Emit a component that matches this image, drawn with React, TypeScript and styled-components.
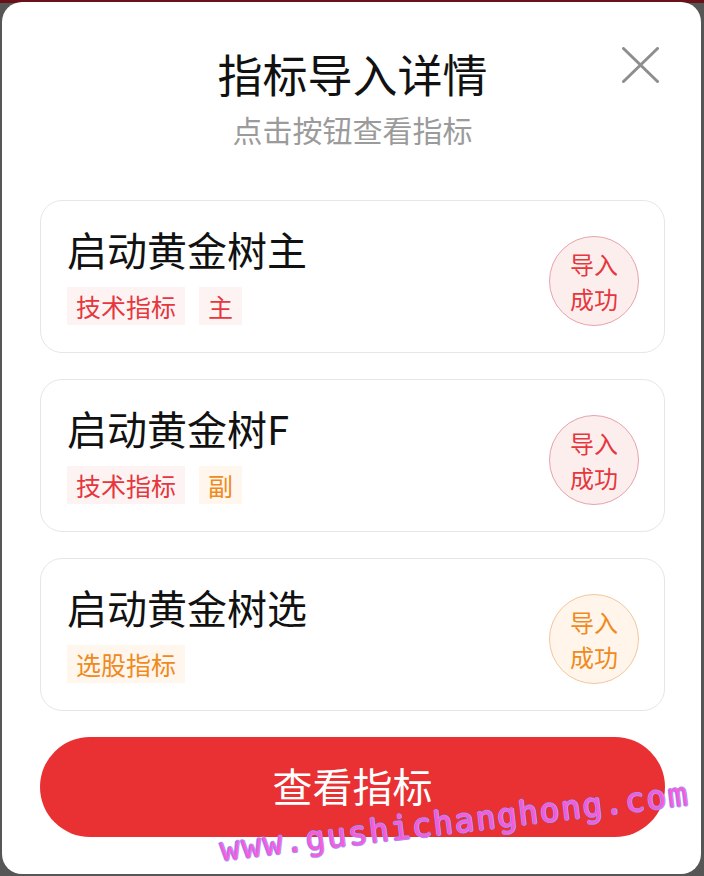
import React from "react";
import styled, { createGlobalStyle } from "styled-components";

const GlobalStyle = createGlobalStyle`
  html, body {
    margin: 0;
    padding: 0;
  }
  body {
    background: linear-gradient(#6a1018 0 3px, #565656 3px);
    font-family: "Noto Sans CJK SC", "Noto Sans", sans-serif;
  }
  * { box-sizing: border-box; }
`;

const Backdrop = styled.div`
  width: 704px;
  height: 876px;
  padding: 2px 3px 2px 2px;
`;

const Modal = styled.div`
  position: relative;
  height: 872px;
  background: #ffffff;
  border-radius: 20px;
  padding: 46px 36px 0 38px;
  display: flex;
  flex-direction: column;
  overflow: hidden;
`;

const Header = styled.header`
  display: flex;
  flex-direction: column;
  align-items: center;
`;

const Title = styled.h1`
  margin: 0;
  font-size: 45px;
  line-height: 52px;
  font-weight: 400;
  color: #111111;
`;

const Subtitle = styled.p`
  margin: 11px 0 0;
  font-size: 30px;
  line-height: 36px;
  color: #9b9b9b;
`;

const CloseButton = styled.button`
  position: absolute;
  top: 45px;
  right: 42px;
  width: 37px;
  height: 36px;
  padding: 0;
  border: none;
  background: transparent;
  display: flex;
`;

const CardList = styled.div`
  margin-top: 53px;
  display: flex;
  flex-direction: column;
  gap: 26px;
`;

const Card = styled.div`
  display: flex;
  align-items: center;
  border: 1px solid #e6e6e6;
  border-radius: 22px;
  padding: 24px 25px 27px 26px;
`;

const CardBody = styled.div`
  flex: 1;
  display: flex;
  flex-direction: column;
`;

const CardTitle = styled.div`
  font-size: 40px;
  line-height: 48px;
  color: #111111;
`;

const Tags = styled.div`
  margin-top: 14px;
  display: flex;
  gap: 14px;
`;

type Tone = "red" | "orange";

const Tag = styled.span<{ $tone: Tone }>`
  height: 38px;
  padding: 0 9px;
  font-size: 25px;
  line-height: 38px;
  color: ${(p) => (p.$tone === "red" ? "#e5373d" : "#f08a1c")};
  background: ${(p) => (p.$tone === "red" ? "#fdf3f3" : "#fff6ee")};
`;

const Badge = styled.div<{ $tone: Tone }>`
  width: 90px;
  height: 90px;
  margin: 6px 0 -6px;
  border-radius: 50%;
  border: 1px solid ${(p) => (p.$tone === "red" ? "#e6a2ad" : "#f3c69c")};
  background: ${(p) => (p.$tone === "red" ? "#fdeeee" : "#fff5eb")};
  color: ${(p) => (p.$tone === "red" ? "#e5373d" : "#f08a1c")};
  font-size: 24px;
  line-height: 35px;
  display: flex;
  flex-direction: column;
  align-items: center;
  justify-content: center;
`;

const PrimaryButton = styled.button`
  margin-top: 26px;
  width: 100%;
  height: 100px;
  border: none;
  border-radius: 50px;
  background: #e93033;
  color: #ffffff;
  font-family: inherit;
  font-size: 40px;
  line-height: 48px;
  padding: 0 0 4px;
`;

const Watermark = styled.div`
  position: absolute;
  left: 218px;
  top: 828px;
  transform: rotate(-6.8deg);
  transform-origin: left center;
  font-family: "DejaVu Sans Mono", monospace;
  font-size: 33px;
  letter-spacing: 1.6px;
  color: #fb5cd6;
  text-shadow: 1px 0 0 #9a90ff, -1px 0 0 #9a90ff, 0 1px 0 #9a90ff,
    0 -1px 0 #9a90ff;
  pointer-events: none;
  white-space: nowrap;
`;

type Item = {
  name: string;
  tags: { label: string; tone: Tone }[];
  badge: Tone;
};

const items: Item[] = [
  {
    name: "启动黄金树主",
    tags: [
      { label: "技术指标", tone: "red" },
      { label: "主", tone: "red" },
    ],
    badge: "red",
  },
  {
    name: "启动黄金树F",
    tags: [
      { label: "技术指标", tone: "red" },
      { label: "副", tone: "orange" },
    ],
    badge: "red",
  },
  {
    name: "启动黄金树选",
    tags: [{ label: "选股指标", tone: "orange" }],
    badge: "orange",
  },
];

export default function App() {
  return (
    <>
      <GlobalStyle />
      <Backdrop>
        <Modal>
          <Header>
            <Title>指标导入详情</Title>
            <Subtitle>点击按钮查看指标</Subtitle>
          </Header>
          <CloseButton aria-label="关闭">
            <svg width="37" height="36" viewBox="0 0 37 36">
              <path
                d="M1.5 1.5 L35.5 34.5 M35.5 1.5 L1.5 34.5"
                stroke="#8e8e8e"
                strokeWidth="3"
                strokeLinecap="round"
                fill="none"
              />
            </svg>
          </CloseButton>
          <CardList>
            {items.map((it) => (
              <Card key={it.name}>
                <CardBody>
                  <CardTitle>{it.name}</CardTitle>
                  <Tags>
                    {it.tags.map((t) => (
                      <Tag key={t.label} $tone={t.tone}>
                        {t.label}
                      </Tag>
                    ))}
                  </Tags>
                </CardBody>
                <Badge $tone={it.badge}>
                  <span>导入</span>
                  <span>成功</span>
                </Badge>
              </Card>
            ))}
          </CardList>
          <PrimaryButton>查看指标</PrimaryButton>
          <Watermark>www.gushichanghong.com</Watermark>
        </Modal>
      </Backdrop>
    </>
  );
}
